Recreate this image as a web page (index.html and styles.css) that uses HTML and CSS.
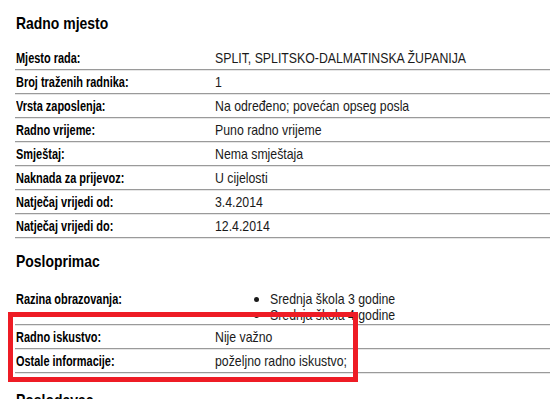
FILE: index.html
```html
<!DOCTYPE html>
<html>
<head>
<meta charset="utf-8">
<link rel="stylesheet" href="styles.css">
</head>
<body>
<div class="page">
  <h2 class="heading"><span class="t">Radno mjesto</span></h2>
  <div class="table">
    <div class="row"><div class="label"><span class="t">Mjesto rada:</span></div><div class="value"><span class="t">SPLIT, SPLITSKO-DALMATINSKA ŽUPANIJA</span></div></div>
    <div class="row"><div class="label"><span class="t">Broj traženih radnika:</span></div><div class="value"><span class="t">1</span></div></div>
    <div class="row"><div class="label"><span class="t">Vrsta zaposlenja:</span></div><div class="value"><span class="t">Na određeno; povećan opseg posla</span></div></div>
    <div class="row"><div class="label"><span class="t">Radno vrijeme:</span></div><div class="value"><span class="t">Puno radno vrijeme</span></div></div>
    <div class="row"><div class="label"><span class="t">Smještaj:</span></div><div class="value"><span class="t">Nema smještaja</span></div></div>
    <div class="row"><div class="label"><span class="t">Naknada za prijevoz:</span></div><div class="value"><span class="t">U cijelosti</span></div></div>
    <div class="row"><div class="label"><span class="t">Natječaj vrijedi od:</span></div><div class="value"><span class="t">3.4.2014</span></div></div>
    <div class="row"><div class="label"><span class="t">Natječaj vrijedi do:</span></div><div class="value"><span class="t">12.4.2014</span></div></div>
  </div>
  <h2 class="heading heading-2"><span class="t">Posloprimac</span></h2>
  <div class="table table-2">
    <div class="row row-list"><div class="label"><span class="t">Razina obrazovanja:</span></div>
      <div class="value"><ul class="list"><li><span class="t">Srednja škola 3 godine</span></li><li><span class="t">Srednja škola 4 godine</span></li></ul></div></div>
    <div class="row"><div class="label"><span class="t">Radno iskustvo:</span></div><div class="value"><span class="t">Nije važno</span></div></div>
    <div class="row"><div class="label"><span class="t">Ostale informacije:</span></div><div class="value"><span class="t">poželjno radno iskustvo;</span></div></div>
  </div>
  <h2 class="heading heading-3"><span class="t">Poslodavac</span></h2>
</div>
<div class="highlight"></div>
</body>
</html>
```
FILE: styles.css
```css
html, body { margin: 0; padding: 0; background: #fff; overflow: hidden; }
body { font-family: "Liberation Sans Narrow", "Liberation Sans", Arial, sans-serif; color: #111; }
.t { display: inline-block; white-space: nowrap; transform-origin: left center; transform: scaleX(0.82); }
.page { padding-left: 15px; }
.heading { margin: 0; padding: 14px 0 0 1px; font-size: 17px; font-weight: bold; line-height: 20px; height: 32px; color: #000; }
.heading-2 { padding-top: 14px; height: 30px; }
.heading-3 { padding-top: 18px; }
.table { display: flex; flex-direction: column; }
.row { display: flex; height: 23px; border-bottom: 1px solid #9a9a9a; box-shadow: 0 1px 0 #e6e6e6; align-items: center; font-size: 15px; }
.label { width: 199px; padding-left: 1px; font-weight: bold; color: #000; flex: none; }
.label .t { transform: scaleX(0.73); }
.value { flex: 1; color: #1a1a1a; }
.row-list { height: 42px; align-items: flex-start; }
.row-list .label { padding-top: 8px; }
.list { margin: 0; padding: 9px 0 0 55px; line-height: 16px; }
.list li { line-height: 16px; }
.highlight { position: absolute; left: 8px; top: 312px; width: 340px; height: 60px; border: 5px solid #ee1c25; }
```
